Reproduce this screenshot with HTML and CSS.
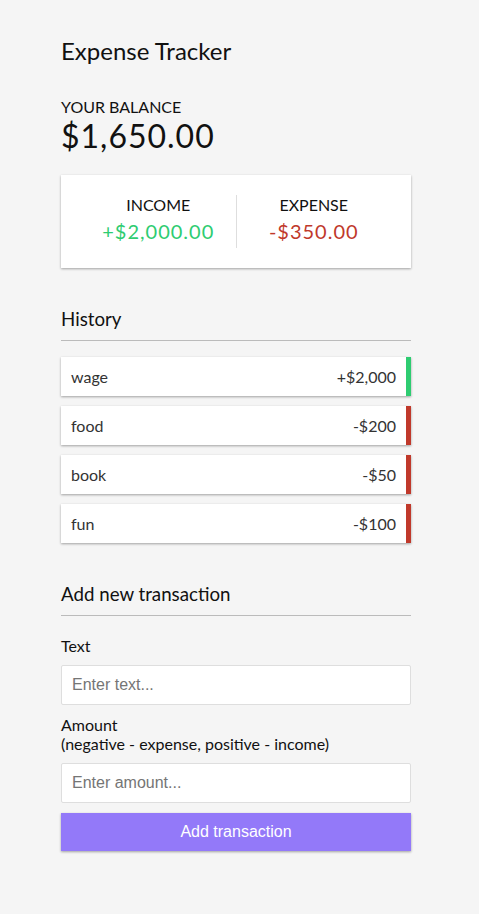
FILE: index.html
```html
<!DOCTYPE html>
<html lang="en">
<head>
<meta charset="UTF-8">
<title>Expense Tracker</title>
<link rel="stylesheet" href="styles.css">
</head>
<body>
  <h2 class="title">Expense Tracker</h2>
  <div class="container">
    <h4>Your Balance</h4>
    <h1 class="balance">$1,650.00</h1>

    <div class="inc-exp-container">
      <div>
        <h4>Income</h4>
        <p class="money plus">+$2,000.00</p>
      </div>
      <div>
        <h4>Expense</h4>
        <p class="money minus">-$350.00</p>
      </div>
    </div>

    <h3>History</h3>
    <ul class="list">
      <li class="plus">wage <span>+$2,000</span></li>
      <li class="minus">food <span>-$200</span></li>
      <li class="minus">book <span>-$50</span></li>
      <li class="minus">fun <span>-$100</span></li>
    </ul>

    <h3>Add new transaction</h3>
    <form>
      <div class="form-control">
        <label for="text">Text</label>
        <input type="text" id="text" placeholder="Enter text...">
      </div>
      <div class="form-control">
        <label for="amount">Amount <br>(negative - expense, positive - income)</label>
        <input type="number" id="amount" placeholder="Enter amount...">
      </div>
      <button class="btn" type="button">Add transaction</button>
    </form>
  </div>
</body>
</html>
```

FILE: styles.css
```css
* {
  box-sizing: border-box;
}

body {
  background-color: #f5f5f5;
  display: flex;
  flex-direction: column;
  align-items: center;
  justify-content: flex-start;
  min-height: 100vh;
  margin: 0;
  padding-right: 7px;
  font-family: Lato, "Noto Sans", sans-serif;
  color: #111;
}

.title {
  width: 350px;
  font-size: 24px;
  font-weight: 400;
  margin: 36px 0 0;
  letter-spacing: 0;
}

.container {
  margin: 32px auto 30px;
  width: 350px;
}

h1 {
  letter-spacing: 1px;
  margin: 0;
  font-size: 32px;
  font-weight: 400;
}

h3 {
  font-size: 18.72px;
  font-weight: 400;
  border-bottom: 1px solid #bbb;
  padding-bottom: 10px;
  margin: 40px 0 10px;
}

h4 {
  margin: 0;
  font-size: 16px;
  font-weight: 400;
  text-transform: uppercase;
}

.inc-exp-container {
  background-color: #fff;
  box-shadow: 0 1px 3px rgba(0, 0, 0, 0.12), 0 1px 2px rgba(0, 0, 0, 0.24);
  padding: 20px;
  display: flex;
  justify-content: space-between;
  margin: 20px 0;
}

.inc-exp-container > div {
  flex: 1;
  text-align: center;
}

.inc-exp-container > div:first-of-type {
  border-right: 1px solid #dedede;
}

.money {
  font-size: 20px;
  letter-spacing: 1px;
  margin: 5px 0;
}

.money.plus {
  color: #2ecc71;
}

.money.minus {
  color: #c0392b;
}

label {
  display: inline-block;
  margin: 10px 0;
  font-size: 16px;
}

input[type='text'],
input[type='number'] {
  border: 1px solid #dedede;
  border-radius: 2px;
  display: block;
  font-family: "Liberation Sans", Arial, sans-serif;
  font-size: 16px;
  padding: 10px;
  width: 100%;
  background: #fff;
}

input::placeholder {
  color: #757575;
}

.btn {
  cursor: pointer;
  background-color: #9379f9;
  box-shadow: 0 1px 3px rgba(0, 0, 0, 0.12), 0 1px 2px rgba(0, 0, 0, 0.24);
  color: #fff;
  border: 0;
  display: block;
  font-family: "Liberation Sans", Arial, sans-serif;
  font-size: 16px;
  margin: 10px 0 0;
  padding: 10px;
  width: 100%;
}

.list {
  list-style-type: none;
  padding: 0;
  margin-bottom: 40px;
}

.list li {
  background-color: #fff;
  box-shadow: 0 1px 3px rgba(0, 0, 0, 0.12), 0 1px 2px rgba(0, 0, 0, 0.24);
  color: #333;
  display: flex;
  justify-content: space-between;
  padding: 10px;
  margin: 10px 0;
  font-size: 16px;
}

.list li.plus {
  border-right: 5px solid #2ecc71;
}

.list li.minus {
  border-right: 5px solid #c0392b;
}
```
